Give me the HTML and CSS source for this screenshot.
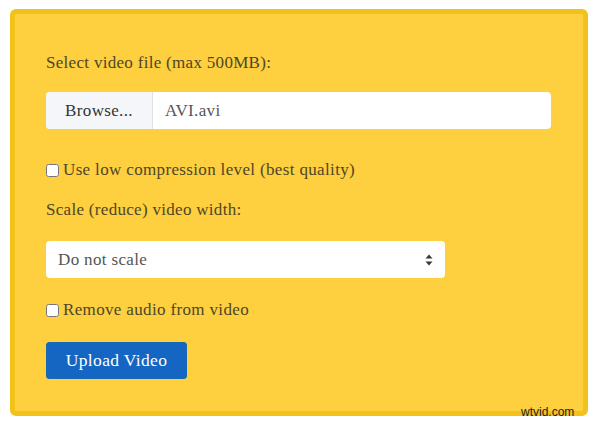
FILE: index.html
```
<!DOCTYPE html>
<html>
<head>
<meta charset="utf-8">
<link rel="stylesheet" href="styles.css">
</head>
<body>
<div class="panel">
  <div class="label first">Select video file (max 500MB):</div>
  <div class="file">
    <div class="browse">Browse...</div>
    <div class="fname">AVI.avi</div>
  </div>
  <label class="check c1"><input type="checkbox"><span>Use low compression level (best quality)</span></label>
  <div class="label second">Scale (reduce) video width:</div>
  <div class="selwrap">
    <select class="sel"><option>Do not scale</option></select>
    <svg class="arrows" width="8" height="12" viewBox="0 0 8 12"><path d="M4 0.5 L7.5 4.5 H0.5 Z M4 11.5 L7.5 7.5 H0.5 Z" fill="#343a40"/></svg>
  </div>
  <label class="check c2"><input type="checkbox"><span>Remove audio from video</span></label>
  <button class="upload">Upload Video</button>
</div>
<div class="mark">wtvid.com</div>
</body>
</html>
```
FILE: styles.css
```
html, body { margin: 0; padding: 0; background: #ffffff; }
body { position: relative; width: 594px; height: 422px; overflow: hidden;
  font-family: "Liberation Serif", "DejaVu Serif", serif; color: #4e4628; }
.panel { margin: 9px 6px 0 10px; height: 397px; border: 5px solid #f1c31a; border-radius: 6px;
  background: #fecf3e; padding: 0 31px; display: flex; flex-direction: column; align-items: flex-start; }
.label { font-size: 17px; line-height: 24px; letter-spacing: 0.3px; }
.first { margin-top: 37px; }
.second { margin-top: 16px; }
.file { margin-top: 17px; width: 505px; height: 37px; display: flex; background: #fff; border-radius: 4px; overflow: hidden; }
.browse { width: 106px; background: #f5f6f9; border-right: 1px solid #dfe1e6; font-size: 17px; line-height: 37px; text-align: center; color: #333; letter-spacing: 0.35px; }
.fname { padding-left: 12px; font-size: 17px; line-height: 37px; color: #555; letter-spacing: 0.35px; }
.check { display: flex; align-items: center; font-size: 17px; line-height: 24px; letter-spacing: 0.35px; }
.check input { margin: 0 4px 0 0; width: 13px; height: 13px; }
.c1 { margin-top: 29px; }
.c2 { margin-top: 20px; }
.selwrap { position: relative; margin-top: 19px; width: 399px; height: 37px; }
.sel { appearance: none; -webkit-appearance: none; width: 399px; height: 37px; border: none; border-radius: 4px; background: #fff;
  padding: 0 12px; font-family: "Liberation Serif", "DejaVu Serif", serif; font-size: 17px; color: #555; letter-spacing: 0.35px; }
.arrows { position: absolute; right: 12px; top: 13px; }
.upload { margin-top: 20px; width: 141px; height: 37px; background: #1565c2; border: 1px solid #1a6ab0; border-radius: 3px; color: #fff;
  font-family: "Liberation Serif", "DejaVu Serif", serif; font-size: 17.5px; letter-spacing: 0.35px; padding: 0; }
.mark { position: absolute; left: 521px; top: 405px; font-family: "Liberation Sans", Arial, sans-serif; font-size: 12px; line-height: 14px; color: #222; }
```
